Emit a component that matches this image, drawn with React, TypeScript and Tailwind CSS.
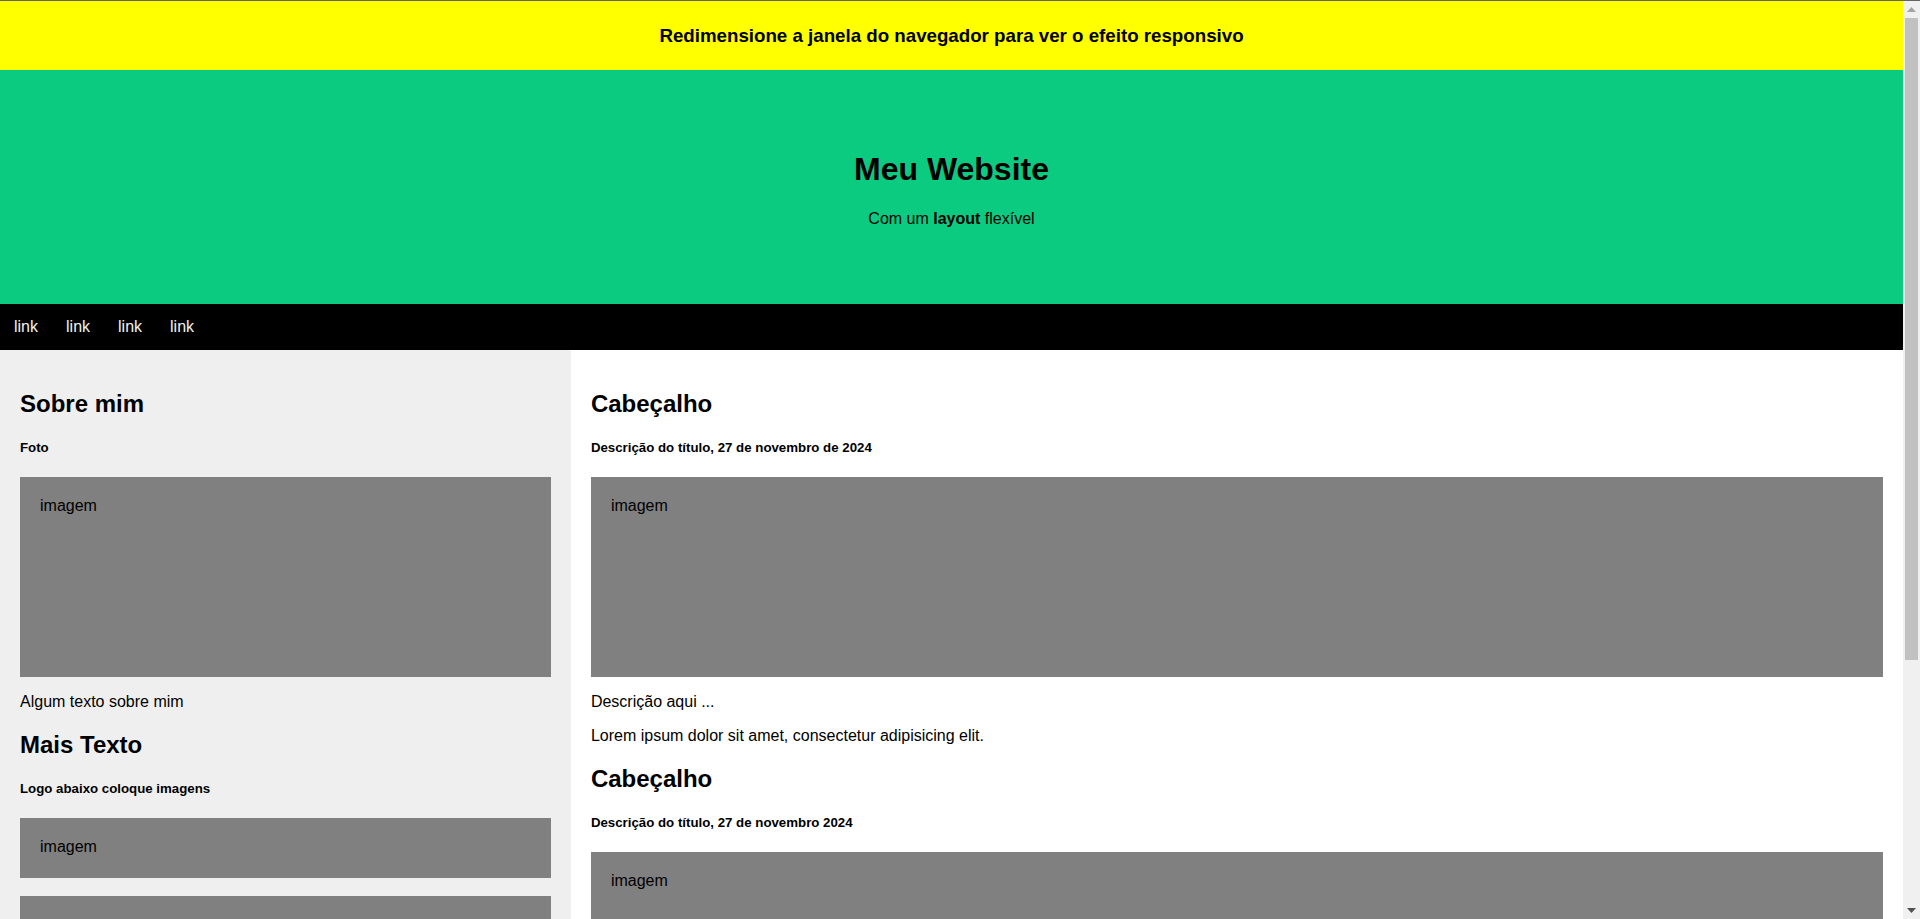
import React from 'react';

const FakeImg = ({ h, label = 'imagem' }: { h: string; label?: string }) => (
  <div className={`bg-[#808080] p-5 text-black ${h}`}>{label}</div>
);

const H2 = ({ children }: { children: React.ReactNode }) => (
  <h2 className="text-[24px] font-bold my-[19.92px]">{children}</h2>
);

const H5 = ({ children }: { children: React.ReactNode }) => (
  <h5 className="text-[13.28px] font-bold my-[22.18px]">{children}</h5>
);

const Scrollbar = () => (
  <div className="w-[17px] flex-shrink-0 bg-[#f0f0f0] flex flex-col">
    <div className="h-[17px] flex items-center justify-center">
      <svg width="9" height="5" viewBox="0 0 9 5">
        <path d="M4.5 0 L9 5 L0 5 Z" fill="#a3a3a3" />
      </svg>
    </div>
    <div className="h-[642px] mx-[2px] bg-[#c1c1c1]" />
    <div className="flex-1" />
    <div className="h-[17px] flex items-center justify-center">
      <svg width="9" height="5" viewBox="0 0 9 5">
        <path d="M0 0 L9 0 L4.5 5 Z" fill="#505050" />
      </svg>
    </div>
  </div>
);

const App: React.FC = () => {
  return (
    <div className="h-screen overflow-hidden flex flex-col bg-white text-black leading-[normal] font-['Liberation_Sans',Arial,sans-serif]">
      <div className="h-px bg-[#646464] flex-shrink-0" />
      <div className="flex flex-1 min-h-0">
        <div className="flex-1 min-w-0 overflow-hidden">
          <div className="h-[69px] bg-[#ffff00] flex items-center justify-center">
            <h3 className="text-[18.72px] font-bold">Redimensione a janela do navegador para ver o efeito responsivo</h3>
          </div>

          <header className="bg-[#0bcb81] py-[60px] text-center">
            <h1 className="text-[32px] font-bold my-[21.44px]">Meu Website</h1>
            <p className="my-4">Com um <b>layout</b> flexível</p>
          </header>

          <nav className="flex bg-black">
            <a href="#" className="p-[14px] text-[#f2f2f2]">link</a>
            <a href="#" className="p-[14px] text-[#f2f2f2]">link</a>
            <a href="#" className="p-[14px] text-[#f2f2f2]">link</a>
            <a href="#" className="p-[14px] text-[#f2f2f2]">link</a>
          </nav>

          <div className="flex">
            <aside className="w-[30%] bg-[#efefef] p-5">
              <H2>Sobre mim</H2>
              <H5>Foto</H5>
              <FakeImg h="h-[200px]" />
              <p className="my-4">Algum texto sobre mim</p>
              <H2>Mais Texto</H2>
              <H5>Logo abaixo coloque imagens</H5>
              <FakeImg h="h-[60px]" />
              <br />
              <FakeImg h="h-[60px]" label="" />
            </aside>

            <main className="w-[70%] bg-white p-5">
              <H2>Cabeçalho</H2>
              <H5>Descrição do título, 27 de novembro de 2024</H5>
              <FakeImg h="h-[200px]" />
              <p className="my-4">Descrição aqui ...</p>
              <p className="my-4">Lorem ipsum dolor sit amet, consectetur adipisicing elit.</p>
              <H2>Cabeçalho</H2>
              <H5>Descrição do título, 27 de novembro 2024</H5>
              <FakeImg h="h-[200px]" />
            </main>
          </div>
        </div>
        <Scrollbar />
      </div>
    </div>
  );
};

export default App;
